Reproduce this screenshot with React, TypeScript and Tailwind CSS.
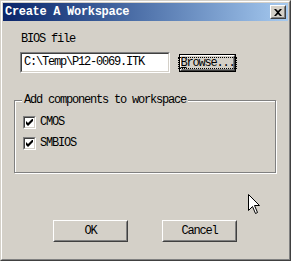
import React from "react";

const mono = { fontFamily: '"Liberation Mono", "DejaVu Sans Mono", monospace' };

function Raised({ className = "", children }: { className?: string; children?: React.ReactNode }) {
  return (
    <div className={`border border-t-white border-l-white border-b-[#404040] border-r-[#404040] ${className}`}>
      <div className="w-full h-full border border-t-[#d4d0c8] border-l-[#d4d0c8] border-b-[#808080] border-r-[#808080] flex items-center justify-center">
        {children}
      </div>
    </div>
  );
}

function Check({ label }: { label: string }) {
  return (
    <div className="flex items-center h-[13px]">
      <div className="w-[13px] h-[13px] border border-t-[#808080] border-l-[#808080] border-b-white border-r-white">
        <div className="w-full h-full border border-t-[#404040] border-l-[#404040] border-b-[#d4d0c8] border-r-[#d4d0c8] bg-white flex items-center justify-center">
          <svg width="7" height="7" viewBox="0 0 7 7">
            <path d="M0 2v3l2 2 5-5V-1L2 4Z" fill="#000" />
          </svg>
        </div>
      </div>
      <span className="ml-[4px] text-[12px] leading-[13px] tracking-[-1.2px] text-black">{label}</span>
    </div>
  );
}

export default function App() {
  return (
    <div className="w-[291px] h-[261px] bg-[#d4d0c8] relative select-none" style={mono}>
      <div className="w-full h-full border border-t-[#d4d0c8] border-l-[#d4d0c8] border-b-[#404040] border-r-[#404040]">
        <div className="w-full h-full border border-t-white border-l-white border-b-[#808080] border-r-[#808080] p-px flex flex-col">
          <div className="h-[18px] bg-gradient-to-r from-[#0a246a] to-[#a6caf0] flex items-center pl-[2px] pr-[2px]">
            <span className="text-white font-bold text-[12px] leading-[12px] tracking-[-0.3px] flex-1">Create A Workspace</span>
            <Raised className="w-[16px] h-[14px] bg-[#d4d0c8]">
              <svg width="8" height="7" viewBox="0 0 8 7">
                <path d="M0 0h2l2 2 2-2h2L5 3.5 8 7H6L4 5 2 7H0l3-3.5Z" fill="#000" />
              </svg>
            </Raised>
          </div>

          <div className="flex-1 flex flex-col">
            <div className="mt-[12px] ml-[18px] h-[13px] text-[12px] leading-[13px] tracking-[-1.2px] text-black">BIOS file</div>

            <div className="mt-[6px] flex items-start">
              <div className="ml-[17px] w-[150px] h-[21px] border border-t-[#808080] border-l-[#808080] border-b-white border-r-white">
                <div className="w-full h-full border border-t-[#404040] border-l-[#404040] border-b-[#d4d0c8] border-r-[#d4d0c8] bg-white flex items-center pl-[2px]">
                  <span className="text-[12px] leading-[13px] tracking-[-1.2px] text-black">C:\Temp\P12-0069.ITK</span>
                </div>
              </div>
              <div className="ml-[9px] mt-[2px] w-[57px] h-[18px] border border-black">
                <Raised className="w-full h-full bg-[#d4d0c8]">
                  <div className="border border-dotted border-black px-[1px] h-[12px] flex items-center">
                    <span className="text-[12px] leading-[12px] tracking-[-1.2px] text-black"><span className="underline">B</span>rowse...</span>
                  </div>
                </Raised>
              </div>
            </div>

            <div className="relative mt-[27px] ml-[11px] w-[262px] h-[73px] border border-[#808080] shadow-[inset_1px_1px_0_white,1px_1px_0_white]">
              <span className="absolute left-[7px] top-[-8px] bg-[#d4d0c8] px-[2px] text-[12px] leading-[14px] tracking-[-1.2px] text-black">Add components to workspace</span>
              <div className="mt-[15px] ml-[8px] flex flex-col gap-[8px]">
                <Check label="CMOS" />
                <Check label="SMBIOS" />
              </div>
            </div>

            <div className="mt-[47px] ml-[50px] flex gap-[34px]">
              <Raised className="w-[75px] h-[22px] bg-[#d4d0c8]">
                <span className="text-[12px] leading-[12px] tracking-[-1.2px] text-black">OK</span>
              </Raised>
              <Raised className="w-[75px] h-[22px] bg-[#d4d0c8]">
                <span className="text-[12px] leading-[12px] tracking-[-1.2px] text-black">Cancel</span>
              </Raised>
            </div>
          </div>
        </div>
      </div>

      <svg className="absolute left-[248px] top-[194px]" width="12" height="20" viewBox="0 0 12 20">
        <path d="M0.5 0.5V16.5L4.5 12.5L7.5 19.5L9.5 18.5L6.5 11.5H11.5Z" fill="#fff" stroke="#000" strokeWidth="1" />
      </svg>
    </div>
  );
}
